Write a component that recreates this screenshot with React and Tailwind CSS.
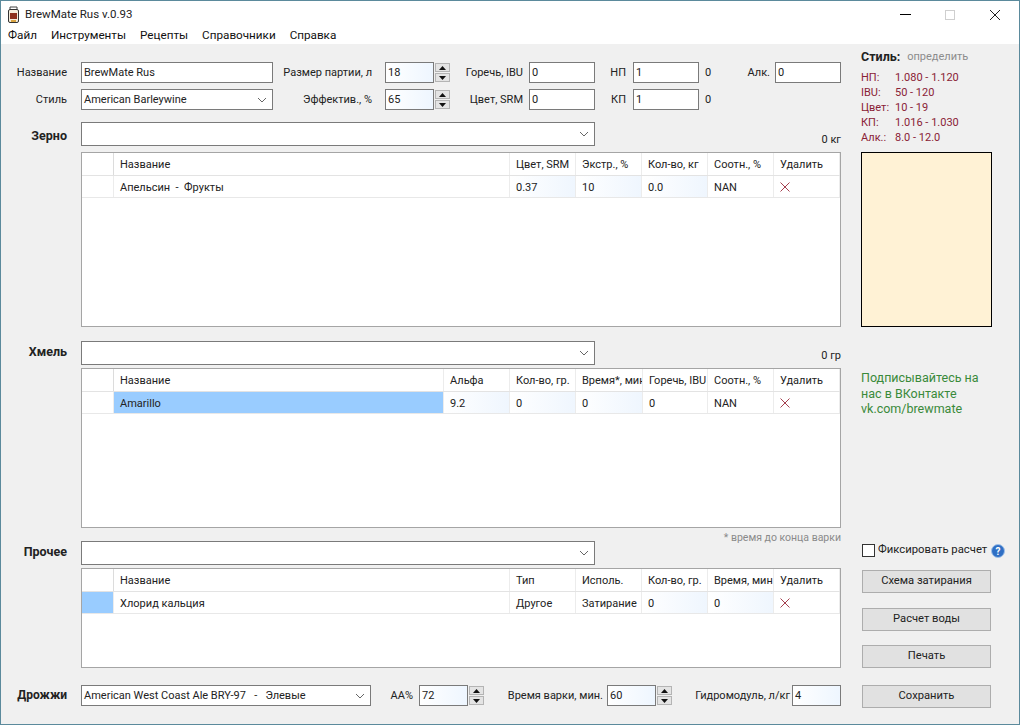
const GRAIN_COLS = [
  { title: "Название", w: "w-[396px]" },
  { title: "Цвет, SRM", w: "w-[66px]" },
  { title: "Экстр., %", w: "w-[66px]" },
  { title: "Кол-во, кг", w: "w-[66px]" },
  { title: "Соотн., %", w: "w-[66px]" },
  { title: "Удалить", w: "w-[66px]" },
];
const HOP_COLS = [
  { title: "Название", w: "w-[330px]" },
  { title: "Альфа", w: "w-[66px]" },
  { title: "Кол-во, гр.", w: "w-[66px]" },
  { title: "Время*, мин", w: "w-[67px]" },
  { title: "Горечь, IBU", w: "w-[65px]" },
  { title: "Соотн., %", w: "w-[66px]" },
  { title: "Удалить", w: "w-[66px]" },
];
const OTHER_COLS = [
  { title: "Название", w: "w-[396px]" },
  { title: "Тип", w: "w-[66px]" },
  { title: "Исполь.", w: "w-[66px]" },
  { title: "Кол-во, гр.", w: "w-[66px]" },
  { title: "Время, мин", w: "w-[66px]" },
  { title: "Удалить", w: "w-[66px]" },
];

const STYLE_RANGES = [
  ["НП:", "1.080 - 1.120"],
  ["IBU:", "50 - 120"],
  ["Цвет:", "10 - 19"],
  ["КП:", "1.016 - 1.030"],
  ["Алк.:", "8.0 - 12.0"],
];

function Chevron() {
  return (
    <svg width="10" height="6" viewBox="0 0 10 6" className="shrink-0">
      <path d="M1 1l4 4 4-4" fill="none" stroke="#666" strokeWidth="1" />
    </svg>
  );
}

function Combo({ value, className }) {
  return (
    <div className={`flex items-center justify-between bg-white border border-[#7a7a7a] pl-[2px] pr-[5px] ${className}`}>
      <span className="whitespace-pre pt-[1px]">{value}</span>
      <Chevron />
    </div>
  );
}

function Field({ value, tinted }) {
  return (
    <input
      readOnly
      value={value}
      className={`block w-full h-[21px] border border-[#7a7a7a] px-[2px] pb-[1px] outline-none ${tinted ? "bg-gradient-to-r from-white to-[#eef6ff]" : "bg-white"}`}
    />
  );
}

function SpinBtn({ up }) {
  return (
    <div className="flex h-[9px] items-center justify-center bg-[#e4e4e4] border border-[#b4b4b4]">
      <svg width="7" height="4" viewBox="0 0 7 4">
        <path d={up ? "M3.5 0L7 4H0z" : "M0 0h7L3.5 4z"} fill="#111" />
      </svg>
    </div>
  );
}

function Spinner({ value }) {
  return (
    <div className="flex w-[65px]">
      <div className="w-[49px]">
        <Field value={value} tinted />
      </div>
      <div className="ml-[1px] flex w-[15px] flex-col justify-between py-[1px]">
        <SpinBtn up />
        <SpinBtn />
      </div>
    </div>
  );
}

function Label({ children, pr }) {
  return <div className={`text-right whitespace-nowrap leading-[21px] ${pr}`}>{children}</div>;
}

function Cell({ col, children, className = "" }) {
  return (
    <div className={`${col.w} shrink-0 overflow-hidden whitespace-pre pl-[6px] border-r border-[#ececec] ${className}`}>
      {children}
    </div>
  );
}

function DeleteMark() {
  return (
    <svg width="10" height="10" viewBox="0 0 10 10" className="mt-[6px]">
      <path d="M0.5 0.5l9 9M9.5 0.5l-9 9" stroke="#a5404f" strokeWidth="1" fill="none" />
    </svg>
  );
}

function DataTable({ cols, cells, height, selectedRow, selectedCell }) {
  return (
    <div className={`${height} ml-[80px] w-[760px] border border-[#a5a5a5] bg-white`}>
      <div className="flex h-[23px] items-center border-b border-[#e3e3e3] leading-[24px]">
        <div className="h-full w-[32px] shrink-0 border-r border-[#dcdcdc]" />
        {cols.map((c) => (
          <Cell key={c.title} col={c} className="h-full border-[#dcdcdc]">
            {c.title}
          </Cell>
        ))}
      </div>
      <div className="flex h-[22px] border-b border-[#e8e8e8] leading-[23px]">
        <div className={`w-[32px] shrink-0 border-r border-[#ececec] ${selectedRow ? "bg-[#99ccff]" : ""}`} />
        {cols.map((c, i) => (
          <Cell
            key={c.title}
            col={c}
            className={`${cells[i].tint ? "bg-gradient-to-r from-white to-[#eff6fe]" : ""} ${i === selectedCell ? "bg-[#99ccff]" : ""}`}
          >
            {cells[i].del ? <DeleteMark /> : cells[i].text}
          </Cell>
        ))}
      </div>
    </div>
  );
}

function SectionHead({ title, total, labelPad, totalPad }) {
  return (
    <div className="grid grid-cols-[80px_514px_1fr]">
      <div className={`pr-[14px] text-right text-[12.5px] font-bold leading-[15px] ${labelPad}`}>{title}</div>
      <Combo value="" className="h-[24px]" />
      <div className={`self-end pr-[10px] text-right leading-[12px] ${totalPad}`}>{total}</div>
    </div>
  );
}

function WinButton({ children }) {
  return (
    <button className="block h-[23px] w-[129px] border border-[#adadad] bg-[#e1e1e1] text-center text-[11.2px]">{children}</button>
  );
}

function BeerIcon() {
  return (
    <svg width="14" height="18" viewBox="0 0 14 18">
      <rect x="1.5" y="3.5" width="10" height="13" rx="1.5" fill="#f4ecdc" stroke="#333" />
      <rect x="3" y="7" width="7" height="6" fill="#8c2f1d" />
      <path d="M4 14h5v2H4z" fill="#d9a441" />
      <path d="M3 3V1h7v2" fill="none" stroke="#444" />
    </svg>
  );
}

export default function App() {
  return (
    <div className="h-[725px] w-[1020px] overflow-hidden border border-[#5b8a9c] bg-[#f0f0f0] font-['Roboto',sans-serif] text-[11px] text-[#222]">
      {/* title + menu */}
      <div className="h-[43px] bg-white">
        <div className="flex h-[27px] items-center pl-[6px]">
          <BeerIcon />
          <span className="ml-[4px] text-[11.5px]">BrewMate Rus v.0.93</span>
          <div className="ml-auto flex items-center pr-[18px]">
            <div className="h-[1px] w-[11px] bg-black" />
            <div className="ml-[34px] h-[10px] w-[10px] border border-[#cfcfcf]" />
            <svg width="12" height="12" viewBox="0 0 12 12" className="ml-[34px]">
              <path d="M1 1l10 10M11 1L1 11" stroke="#222" strokeWidth="1" fill="none" />
            </svg>
          </div>
        </div>
        <div className="flex h-[16px] items-center gap-[14px] pl-[7px] text-[11.7px] text-[#111]">
          <span>Файл</span>
          <span>Инструменты</span>
          <span>Рецепты</span>
          <span>Справочники</span>
          <span>Справка</span>
        </div>
      </div>

      <div className="flex">
        {/* left column */}
        <div className="w-[850px] shrink-0 pt-[18px]">
          <div className="grid grid-cols-[80px_192px_112px_65px_79px_66px_38px_66px_76px_66px] gap-y-[6px]">
            <Label pr="pr-[14px]">Название</Label>
            <Field value="BrewMate Rus" />
            <Label pr="pr-[13px]">Размер партии, л</Label>
            <Spinner value="18" />
            <Label pr="pr-[6px]">Горечь, IBU</Label>
            <Field value="0" />
            <Label pr="pr-[7px]">НП</Label>
            <Field value="1" />
            <div className="flex justify-between pl-[6px] pr-[5px] leading-[21px]">
              <span>0</span>
              <span>Алк.</span>
            </div>
            <Field value="0" />

            <Label pr="pr-[14px]">Стиль</Label>
            <Combo value="American Barleywine" className="h-[21px]" />
            <Label pr="pr-[13px]">Эффектив., %</Label>
            <Spinner value="65" />
            <Label pr="pr-[6px]">Цвет, SRM</Label>
            <Field value="0" />
            <Label pr="pr-[7px]">КП</Label>
            <Field value="1" />
            <div className="pl-[6px] leading-[21px]">0</div>
          </div>

          <div className="mt-[12px]">
            <SectionHead title="Зерно" total="0 кг" labelPad="pt-[6px]" totalPad="" />
          </div>
          <div className="mt-[6px]">
            <DataTable
              cols={GRAIN_COLS}
              height="h-[175px]"
              cells={[
                { text: "Апельсин  -  Фрукты" },
                { text: "0.37", tint: true },
                { text: "10", tint: true },
                { text: "0.0", tint: true },
                { text: "NAN" },
                { del: true },
              ]}
            />
          </div>

          <div className="mt-[14px]">
            <SectionHead title="Хмель" total="0 гр" labelPad="pt-[3px]" totalPad="pb-[3px]" />
          </div>
          <div className="mt-[3px]">
            <DataTable
              cols={HOP_COLS}
              height="h-[160px]"
              selectedCell={0}
              cells={[
                { text: "Amarillo" },
                { text: "9.2", tint: true },
                { text: "0", tint: true },
                { text: "0", tint: true },
                { text: "0" },
                { text: "NAN" },
                { del: true },
              ]}
            />
          </div>

          <div className="h-[13px] w-[840px] text-right text-[10.5px] leading-[19px] text-[#8a8a8a]">
            * время до конца варки
          </div>

          <SectionHead title="Прочее" total="" labelPad="pt-[3px]" totalPad="" />
          <div className="mt-[3px]">
            <DataTable
              cols={OTHER_COLS}
              height="h-[100px]"
              selectedRow
              cells={[
                { text: "Хлорид кальция" },
                { text: "Другое" },
                { text: "Затирание" },
                { text: "0", tint: true },
                { text: "0", tint: true },
                { del: true },
              ]}
            />
          </div>

          <div className="mt-[17px] grid grid-cols-[80px_290px_48px_65px_123px_65px_120px_49px]">
            <div className="pr-[14px] text-right text-[12px] font-bold leading-[21px]">Дрожжи</div>
            <Combo value="American West Coast Ale BRY-97   -   Элевые" className="h-[21px]" />
            <Label pr="pr-[6px]">АА%</Label>
            <Spinner value="72" />
            <Label pr="pr-[4px]">Время варки, мин.</Label>
            <Spinner value="60" />
            <Label pr="pr-[2px]">Гидромодуль, л/кг</Label>
            <Field value="4" tinted />
          </div>
        </div>

        {/* right column */}
        <div className="flex-1 pl-[10px] pt-[6px]">
          <div className="flex h-[14px] items-center leading-[14px]">
            <span className="text-[12.5px] font-bold">Стиль:</span>
            <span className="ml-[7px] text-[#8c8c8c]">определить</span>
          </div>
          <div className="mt-[6px] grid grid-cols-[34px_1fr] leading-[15px] text-[#8a2236]">
            {STYLE_RANGES.map(([name, range]) => (
              <div key={name} className="contents">
                <span>{name}</span>
                <span>{range}</span>
              </div>
            ))}
          </div>
          <div className="mt-[7px] h-[175px] w-[131px] border border-black bg-[#fff2d5]" />
          <div className="mt-[43px] w-[130px] text-[12.5px] leading-[15.5px] text-[#3a8a3a]">
            Подписывайтесь на нас в ВКонтакте vk.com/brewmate
          </div>
          <div className="mt-[127px] flex h-[14px] items-center">
            <div className="ml-[1px] h-[13px] w-[13px] border border-[#333] bg-white" />
            <span className="ml-[3px] w-[113px] whitespace-nowrap text-[11.3px]">Фиксировать расчет</span>
            <svg width="14" height="14" viewBox="0 0 14 14">
              <circle cx="7" cy="7" r="6.5" fill="#2f6fc4" stroke="#9fc0e8" />
              <text x="7" y="10.5" textAnchor="middle" fontSize="10" fontWeight="bold" fill="#fff">?</text>
            </svg>
          </div>
          <div className="ml-[1px] mt-[12px] flex flex-col">
            <WinButton>Схема затирания</WinButton>
            <div className="mt-[15px]"><WinButton>Расчет воды</WinButton></div>
            <div className="mt-[14px]"><WinButton>Печать</WinButton></div>
            <div className="mt-[17px]"><WinButton>Сохранить</WinButton></div>
          </div>
        </div>
      </div>
    </div>
  );
}
